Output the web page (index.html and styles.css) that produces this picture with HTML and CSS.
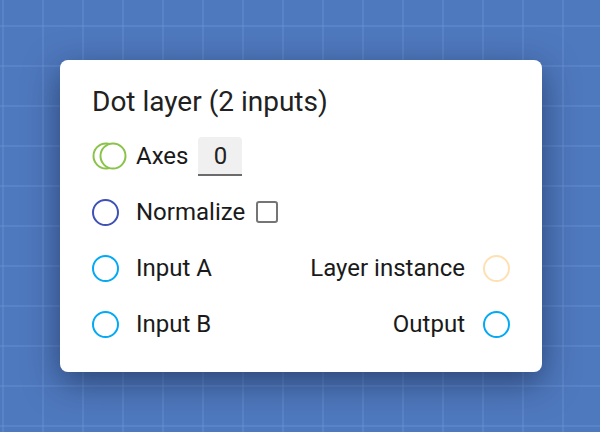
FILE: index.html
```html
<!DOCTYPE html>
<html>
<head>
<meta charset="utf-8">
<link rel="stylesheet" href="styles.css">
</head>
<body>
<div class="card">
  <div class="title">Dot layer (2 inputs)</div>
  <div class="row">
    <div class="side">
      <span class="port">
        <svg width="38" height="30" viewBox="0 0 38 30"><circle cx="14" cy="15" r="12.5" fill="#fff" stroke="#8bc34a" stroke-width="2"/><circle cx="21" cy="15" r="12.5" fill="#fff" stroke="#8bc34a" stroke-width="2"/></svg>
      </span>
      <span class="label">Axes</span>
      <span class="field">0</span>
    </div>
  </div>
  <div class="row">
    <div class="side">
      <span class="port"><span class="ring indigo"></span></span>
      <span class="label">Normalize</span>
      <span class="check"></span>
    </div>
  </div>
  <div class="row">
    <div class="side">
      <span class="port"><span class="ring blue"></span></span>
      <span class="label">Input A</span>
    </div>
    <div class="side right">
      <span class="label">Layer instance</span>
      <span class="ring orange"></span>
    </div>
  </div>
  <div class="row">
    <div class="side">
      <span class="port"><span class="ring blue"></span></span>
      <span class="label">Input B</span>
    </div>
    <div class="side right">
      <span class="label">Output</span>
      <span class="ring blue"></span>
    </div>
  </div>
</div>
</body>
</html>
```
FILE: styles.css
```css
html, body {
  margin: 0;
  height: 100%;
}
body {
  width: 600px;
  height: 432px;
  overflow: hidden;
  background-color: #4f79be;
  background-image:
    linear-gradient(to right, rgba(110,150,215,0.35) 0, rgba(110,150,215,0.35) 2px, transparent 2px),
    linear-gradient(to bottom, rgba(110,150,215,0.35) 0, rgba(110,150,215,0.35) 2px, transparent 2px);
  background-size: 40px 40px;
  background-position: 2px 25px;
  padding: 60px 0 0 60px;
  box-sizing: border-box;
  font-family: Roboto, "Noto Sans", sans-serif;
  color: #212121;
}
.card {
  width: 482px;
  height: 312px;
  box-sizing: border-box;
  background: #fff;
  border-radius: 8px;
  padding: 26px 32px 20px 32px;
  box-shadow: 0 10px 34px rgba(15, 25, 55, 0.55);
}
.title {
  font-size: 28px;
  line-height: 32px;
  margin-bottom: 10px;
  color: #212121;
}
.row {
  height: 56px;
  display: flex;
  align-items: center;
  justify-content: space-between;
}
.side {
  display: flex;
  align-items: center;
}
.port {
  width: 44px;
  display: flex;
  align-items: center;
}
.label {
  font-size: 24px;
  line-height: 28px;
  color: #1a1a1a;
}
.right .label {
  margin-right: 18px;
}
.ring {
  display: block;
  width: 27px;
  height: 27px;
  box-sizing: border-box;
  border-radius: 50%;
  border: 2px solid #03a9f4;
}
.ring.indigo { border-color: #3f51b5; }
.ring.blue { border-color: #03a9f4; }
.ring.orange { border-color: #ffe0b2; }
.field {
  margin-left: 10px;
  width: 44px;
  height: 39px;
  box-sizing: border-box;
  background: #f0f0f0;
  border-radius: 4px 4px 0 0;
  border-bottom: 2px solid #6b6b6b;
  display: flex;
  align-items: center;
  justify-content: center;
  font-size: 24px;
  color: #222;
  padding-top: 2px;
}
.check {
  margin-left: 11px;
  width: 22px;
  height: 22px;
  box-sizing: border-box;
  border: 2px solid #757575;
  border-radius: 3px;
}
```
